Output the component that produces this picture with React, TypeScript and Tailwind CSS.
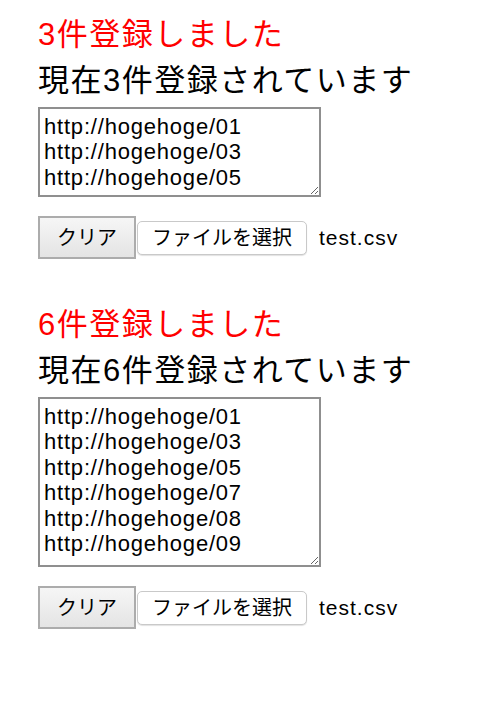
import React from 'react';

const jp = '"Liberation Sans", "Noto Sans CJK JP", sans-serif';

interface BlockProps {
  count: number;
  urls: string[];
  height: string;
}

// One upload result: message, count, list and the controls under it
const UploadBlock = ({ count, urls, height }: BlockProps) => {
  return (
    <div className="flex flex-col items-start">
      <p className="text-[31px] leading-[46px] tracking-[1.5px] text-[#ff0000]">
        {count}件登録しました
      </p>
      <p className="text-[31px] leading-[46px] tracking-[1.5px] text-black">
        現在{count}件登録されています
      </p>
      <textarea
        readOnly
        value={urls.join('\n')}
        className={`mt-[3px] w-[283px] ${height} border-2 border-[#8f8f8f] bg-white px-[4px] pt-[5px] text-[22px] leading-[25.4px] tracking-[0.8px] text-black outline-none overflow-hidden`}
        style={{ fontFamily: jp }} />

      <div className="mt-[19px] flex items-center">
        <button className="h-[43px] w-[98px] border-2 border-[#acacac] bg-gradient-to-b from-[#f6f6f6] to-[#e4e4e4] text-[20px] text-black">
          クリア
        </button>
        <button className="ml-[1px] h-[34px] w-[170px] rounded-[5px] border border-[#c9c9c9] bg-white text-[20px] text-black shadow-[0_1px_1px_rgba(0,0,0,0.12)]">
          ファイルを選択
        </button>
        <span className="ml-[12px] text-[21px] tracking-[1px] text-black">test.csv</span>
      </div>
    </div>);

};

export default function App() {
  return (
    <div
      className="min-h-[702px] w-full bg-white pl-[38px] pt-[12px]"
      style={{ fontFamily: jp }}>
      
      <div className="flex flex-col gap-[43px]">
        <UploadBlock
          count={3}
          height="h-[90px]"
          urls={['http://hogehoge/01', 'http://hogehoge/03', 'http://hogehoge/05']} />
        
        <UploadBlock
          count={6}
          height="h-[170px]"
          urls={[
          'http://hogehoge/01',
          'http://hogehoge/03',
          'http://hogehoge/05',
          'http://hogehoge/07',
          'http://hogehoge/08',
          'http://hogehoge/09']
          } />
        
      </div>
    </div>);

}
